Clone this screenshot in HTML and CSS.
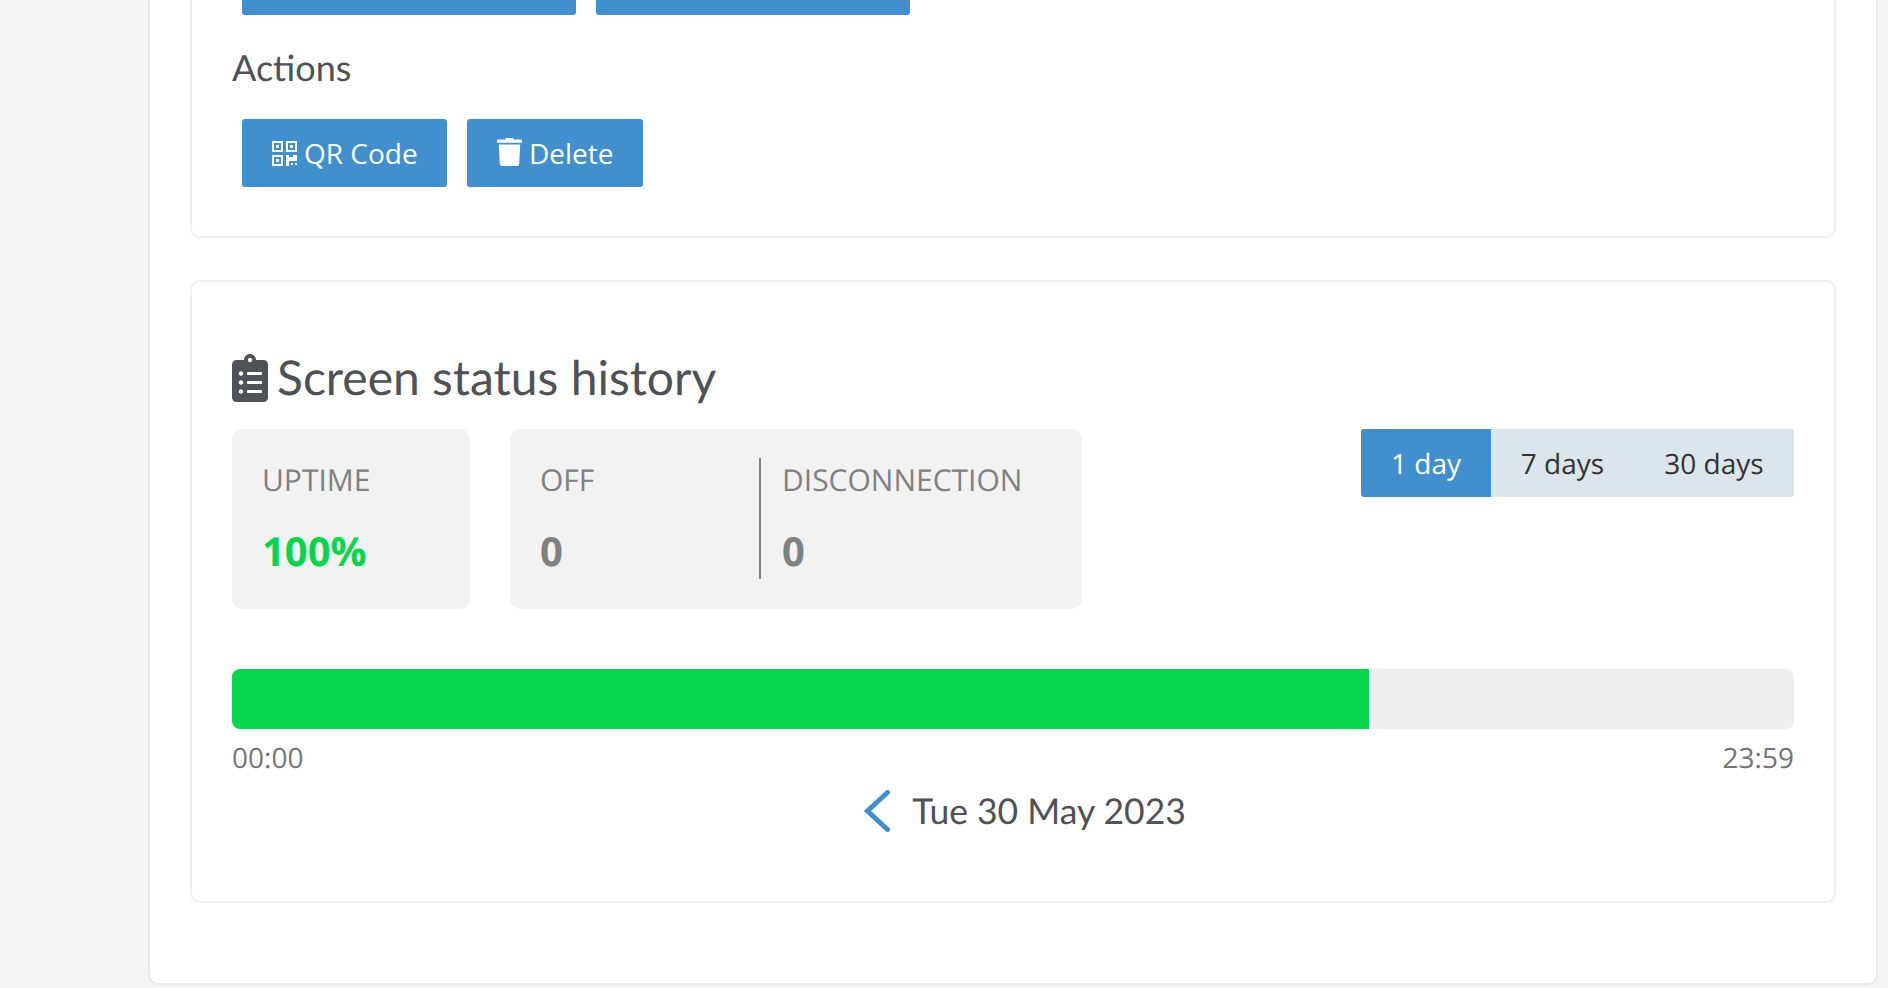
FILE: index.html
```html
<!DOCTYPE html>
<html lang="en">
<head>
<meta charset="utf-8">
<title>Screen status history</title>
<link rel="stylesheet" href="styles.css">
</head>
<body>
<main class="panel">
  <section class="card card-actions">
    <div class="btn-row cut-row">
      <div class="btn cut-a"></div>
      <div class="btn cut-b"></div>
    </div>
    <h3 class="sub">Actions</h3>
    <div class="btn-row">
      <button class="btn btn-qr">
        <svg class="ic-qr" viewBox="0 0 25 25" fill="#fff"><path fill-rule="evenodd" d="M0 0h11v11H0zM2 2v7h7V2zM14 0h11v11H14zM16 2v7h7V2zM0 14h11v11H0zM2 16v7h7v-7z"/><path d="M4 4h3v3H4zM18 4h3v3h-3zM4 18h3v3H4zM14 14h3v2h4v-2h4v6h-8v5h-3zM19 22h2v2h-2zM23 22h2v2h-2z"/></svg>
        QR Code
      </button>
      <button class="btn btn-del">
        <svg class="ic-trash" viewBox="0 0 25 28" fill="#fff"><path d="M9 0h7l1.2 1.6H24a1 1 0 0 1 1 1v1.600a.6.6 0 0 1-.6.6H.6A.6.6 0 0 1 0 4.200V2.600a1 1 0 0 1 1-1h6.800zM1.800 6.500h21.400l-1 19.300a2.300 2.300 0 0 1-2.300 2.200H5.100a2.300 2.300 0 0 1-2.300-2.200z"/></svg>
        Delete
      </button>
    </div>
  </section>

  <section class="card card-history">
    <h2 class="title">
      <svg class="ic-clip" viewBox="0 0 384 512" fill="#4f5257"><path d="M336 64h-80c0-35.300-28.700-64-64-64s-64 28.700-64 64H48C21.500 64 0 85.500 0 112v352c0 26.500 21.500 48 48 48h288c26.500 0 48-21.500 48-48V112c0-26.500-21.500-48-48-48zM96 424c-13.300 0-24-10.700-24-24s10.700-24 24-24 24 10.700 24 24-10.700 24-24 24zm0-96c-13.300 0-24-10.700-24-24s10.700-24 24-24 24 10.700 24 24-10.700 24-24 24zm0-96c-13.300 0-24-10.700-24-24s10.700-24 24-24 24 10.700 24 24-10.700 24-24 24zm96-192c13.300 0 24 10.700 24 24s-10.700 24-24 24-24-10.700-24-24 10.700-24 24-24zm128 368c0 4.400-3.600 8-8 8H168c-4.400 0-8-3.600-8-8v-16c0-4.400 3.600-8 8-8h144c4.400 0 8 3.600 8 8v16zm0-96c0 4.400-3.600 8-8 8H168c-4.400 0-8-3.600-8-8v-16c0-4.400 3.600-8 8-8h144c4.400 0 8 3.600 8 8v16zm0-96c0 4.400-3.600 8-8 8H168c-4.400 0-8-3.600-8-8v-16c0-4.400 3.600-8 8-8h144c4.400 0 8 3.600 8 8v16z"/></svg>
      Screen status history
    </h2>
    <div class="stats-row">
      <div class="stat-box stat-uptime">
        <div class="stat">
          <div class="stat-label">UPTIME</div>
          <div class="stat-value green">100%</div>
        </div>
      </div>
      <div class="stat-box stat-split">
        <div class="stat stat-off">
          <div class="stat-label">OFF</div>
          <div class="stat-value">0</div>
        </div>
        <div class="stat stat-disc">
          <div class="stat-label">DISCONNECTION</div>
          <div class="stat-value">0</div>
        </div>
      </div>
      <div class="segment">
        <div class="seg seg-active">1 day</div>
        <div class="seg seg-7">7 days</div>
        <div class="seg seg-30">30 days</div>
      </div>
    </div>
    <div class="bar"><div class="bar-fill" style="width:72.8%"></div></div>
    <div class="bar-times"><span>00:00</span><span>23:59</span></div>
    <div class="date-nav">
      <svg class="ic-chev" viewBox="0 0 26 42" fill="none" stroke="#4190cd" stroke-width="5" stroke-linecap="round" stroke-linejoin="miter"><path d="M23.500 2.500 3.500 21l20 18.500"/></svg>
      <span class="date">Tue 30 May 2023</span>
    </div>
  </section>
</main>
</body>
</html>
```

FILE: styles.css
```css
* { box-sizing: border-box; }

html, body {
  margin: 0;
  height: 988px;
  overflow: hidden;
}

body {
  background: #f4f4f4;
  font-family: "Open Sans", "Noto Sans", sans-serif;
  padding-left: 148px;
  text-rendering: geometricPrecision;
}

.panel {
  width: 1730px;
  height: 1045px;
  margin-top: -60px;
  padding: 0 40px;
  background: #fff;
  border: 2px solid #e9e9e9;
  border-radius: 10px;
}

.card {
  background: #fff;
  border: 2px solid #f0f0f0;
  border-radius: 10px;
  padding: 0 40px;
}

.card-actions {
  height: 298px;
  margin-top: -2px;
  border-top: 0;
  border-radius: 0 0 10px 10px;
  padding-top: 8px;
}

.card-history {
  height: 623px;
  margin-top: 42px;
  padding-top: 72px;
}

.btn-row {
  display: flex;
  gap: 20px;
  padding-left: 10px;
}

.btn {
  display: flex;
  align-items: center;
  height: 68px;
  padding: 0;
  border: 0;
  border-radius: 3px;
  background: #4190cd;
  color: #fff;
  font: 400 28px/1 "Open Sans", sans-serif;
}

.cut-row { height: 67px; }
.cut-a { width: 334px; height: 67px; }
.cut-b { width: 314px; height: 67px; }

.btn-qr { width: 205px; padding-left: 30px; gap: 7px; }
.btn-del { width: 176px; padding-left: 30px; gap: 7px; }

.ic-qr { width: 25px; height: 25px; flex: none; }
.ic-trash { width: 25px; height: 28px; flex: none; margin-top: -2px; }

.sub {
  margin: 0;
  height: 104px;
  padding-top: 32px;
  font: 400 36px/40px "Lato", sans-serif;
  color: #4f5155;
}

.title {
  display: flex;
  align-items: center;
  gap: 9px;
  height: 48px;
  margin: 0 0 27px;
  font: 400 48px/50px "Lato", sans-serif;
  color: #4f5155;
}

.ic-clip { width: 36px; height: 48px; flex: none; }

.stats-row {
  display: flex;
  align-items: flex-start;
  gap: 40px;
}

.stat-box {
  display: flex;
  height: 180px;
  padding: 29px 0 0 30px;
  background: #f2f2f2;
  border-radius: 10px;
}

.stat-uptime { width: 238px; }
.stat-split { width: 572px; }

.stat-off { width: 221px; height: 121px; border-right: 2px solid #7f7f7f; }
.stat-disc { padding-left: 21px; }

.stat-label {
  font: 400 30px/44px "Open Sans", sans-serif;
  color: #808080;
}

.stat-value {
  margin-top: 25px;
  font: 700 40px/48px "Open Sans", sans-serif;
  color: #808080;
}

.green { color: #07d54d; }

.segment {
  display: flex;
  height: 68px;
  margin-left: auto;
  background: #dbe5eb;
  border-radius: 3px;
  overflow: hidden;
  font-size: 28px;
  line-height: 70px;
  color: #333;
}

.seg-active { width: 130px; text-align: center; background: #4190cd; color: #fff; }
.seg-7 { width: 143px; text-align: center; }
.seg-30 { width: 160px; text-align: center; }

.bar {
  height: 60px;
  margin-top: 60px;
  background: #efefef;
  border-radius: 8px;
  overflow: hidden;
}

.bar-fill {
  height: 100%;
  background: #07d54d;
}

.bar-times {
  display: flex;
  justify-content: space-between;
  margin-top: 11px;
  font-size: 28px;
  line-height: 36px;
  color: #757575;
}

.date-nav {
  display: flex;
  align-items: center;
  justify-content: center;
  gap: 22px;
  margin-top: 12px;
  padding-left: 24px;
}

.ic-chev { width: 26px; height: 42px; flex: none; }

.date {
  font: 400 35.5px/46px "Lato", sans-serif;
  color: #4f5155;
}
```
